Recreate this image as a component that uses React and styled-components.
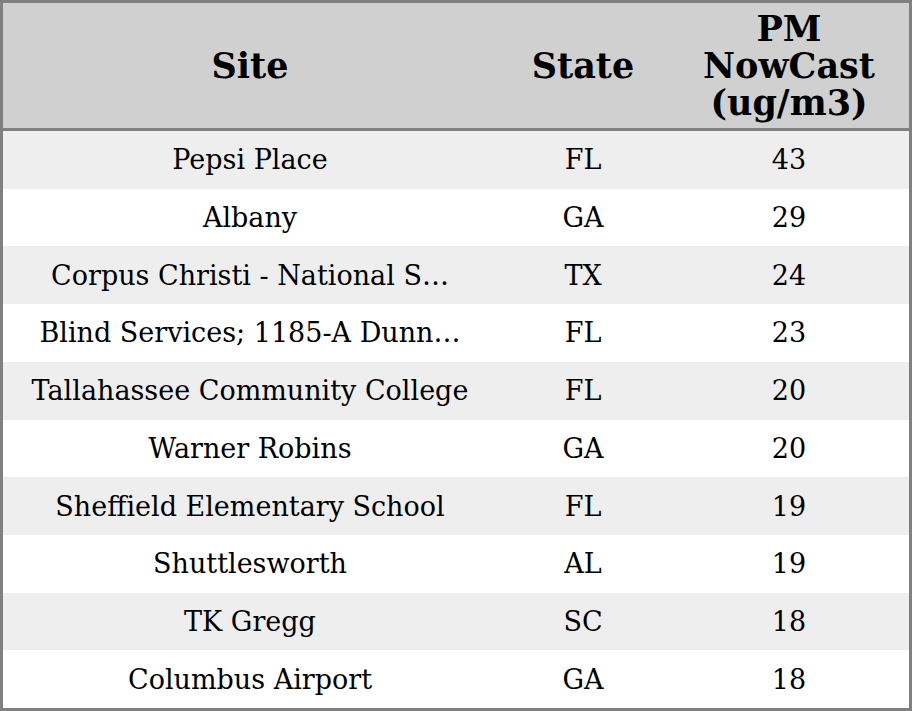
import React from "react";
import styled, { createGlobalStyle } from "styled-components";

const GlobalStyle = createGlobalStyle`
    html, body {
        margin: 0;
        padding: 0;
        background: #ffffff;
    }
    body {
        font-family: "DejaVu Serif", "Liberation Serif", serif;
        color: #000000;
    }
`

const Table = styled.div`
    box-sizing: border-box;
    width: 912px;
    height: 711px;
    border: 3px solid #808080;
    display: grid;
    grid-template-columns: 494px 172px 1fr;
    grid-template-rows: 128px repeat(10, 1fr);
    overflow: hidden;
`

const HeadCell = styled.div`
    box-sizing: border-box;
    background-color: #d0d0d0;
    border-bottom: 3px solid #808080;
    display: flex;
    align-items: center;
    justify-content: center;
    text-align: center;
    font-weight: bold;
    font-size: 35px;
    line-height: 37px;
    padding: 0 4px;
    min-width: 0;
`

const Cell = styled.div`
    background-color: ${props => props.$odd ? "#eeeeee" : "#ffffff"};
    display: flex;
    align-items: center;
    justify-content: center;
    font-size: 27px;
    white-space: nowrap;
    min-width: 0;
`

// long site names get cut to 27 chars
const shorten = (s) => s.length > 30 ? s.slice(0, 27) + "\u2026" : s

const rows = [
    {site: "Pepsi Place", state: "FL", pm: 43},
    {site: "Albany", state: "GA", pm: 29},
    {site: "Corpus Christi - National Seashore", state: "TX", pm: 24},
    {site: "Blind Services; 1185-A Dunn Avenue", state: "FL", pm: 23},
    {site: "Tallahassee Community College", state: "FL", pm: 20},
    {site: "Warner Robins", state: "GA", pm: 20},
    {site: "Sheffield Elementary School", state: "FL", pm: 19},
    {site: "Shuttlesworth", state: "AL", pm: 19},
    {site: "TK Gregg", state: "SC", pm: 18},
    {site: "Columbus Airport", state: "GA", pm: 18},
]

export default function App() {
    return (
        <>
            <GlobalStyle />
            <Table>
                <HeadCell>Site</HeadCell>
                <HeadCell>State</HeadCell>
                <HeadCell>PM<br />NowCast<br />(ug/m3)</HeadCell>
                {rows.map((r, i) => (
                    <React.Fragment key={r.site}>
                        <Cell $odd={i % 2 === 0}>{shorten(r.site)}</Cell>
                        <Cell $odd={i % 2 === 0}>{r.state}</Cell>
                        <Cell $odd={i % 2 === 0}>{r.pm}</Cell>
                    </React.Fragment>
                ))}
            </Table>
        </>
    )
}
